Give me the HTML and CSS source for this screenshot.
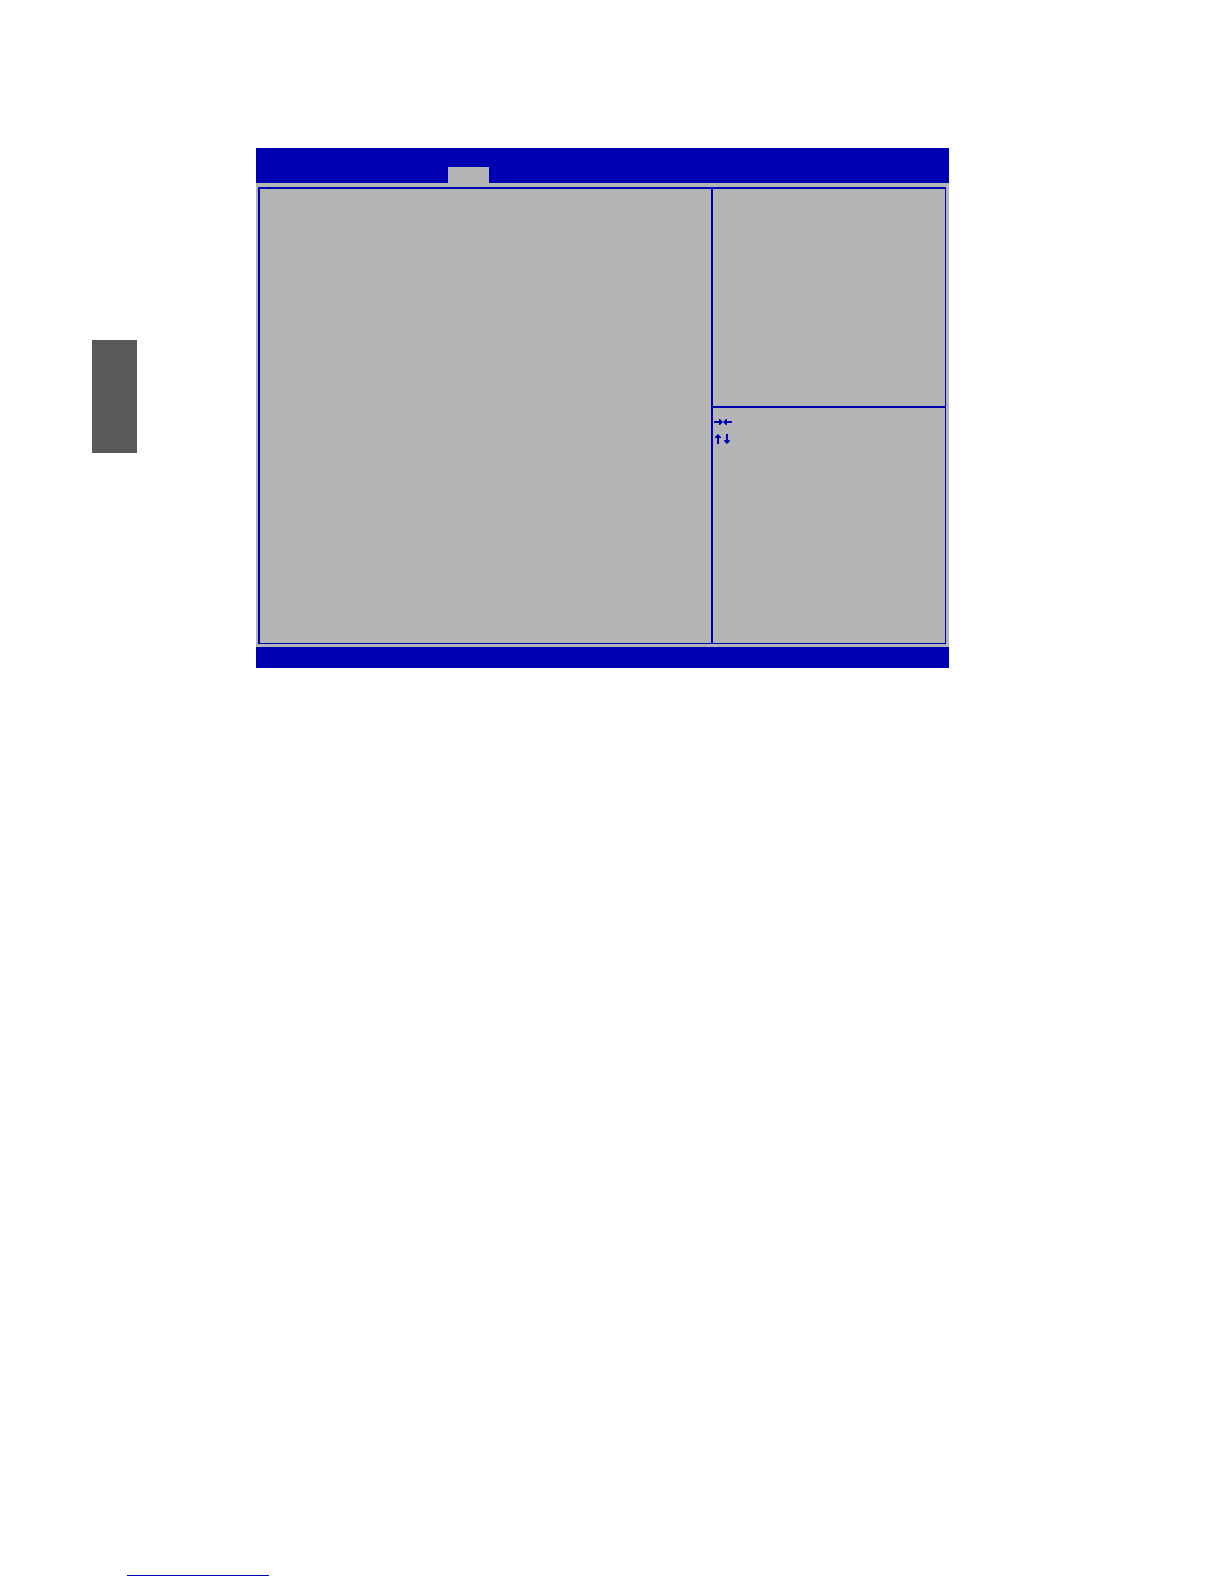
FILE: index.html
```
<!DOCTYPE html>
<html lang="en">
<head>
    <meta charset="UTF-8">
    <meta name="viewport" content="width=device-width, initial-scale=1.0">
    <title>BIOS Setup Utility</title>
    <link rel="stylesheet" href="styles.css">
</head>
<body>

<main class="page">
    <div class="side-tab"></div>

    <section class="screen">
        <header class="screen-header">
            <div class="active-tab"></div>
        </header>
        <div class="screen-body">
            <div class="settings"></div>
            <div class="sidebar">
                <div class="help"></div>
                <div class="keys">
                    <svg class="arrows" width="20" height="12" viewBox="0 0 20 12" aria-hidden="true">
                        <path d="M0 5h5V3h1l3 3-3 3H5V7H0zM18 5h-5V3h-1L9 6l3 3h1V7h5z"/>
                    </svg>
                    <svg class="arrows" width="20" height="12" viewBox="0 0 20 12" aria-hidden="true">
                        <path d="M3 11V5H1V4l3-3 3 3v1H5v6zM12 1v6h-2v1l3 3 3-3V7h-2V1z"/>
                    </svg>
                </div>
            </div>
        </div>
        <footer class="screen-footer"></footer>
    </section>
</main>

<footer class="page-footer">
    <div class="link-line"></div>
</footer>

</body>
</html>
```

FILE: styles.css
```
body {
    margin: 0;
    min-height: 100vh;
    display: flex;
    flex-direction: column;
    justify-content: space-between;
    font-family: "Liberation Sans", Arial, sans-serif;
    background-color: #ffffff;
}
.page {
    display: flex;
    align-items: flex-start;
    padding: 148px 275px 0 92px;
}

/* Gray chapter tab in the left margin */
.side-tab {
    flex: none;
    width: 45px;
    height: 113px;
    margin: 192px 119px 0 0;
    background-color: #58595b;
}

/* BIOS screen */
.screen {
    flex: 1;
    background-color: #b5b5b5;
}
.screen-header {
    display: flex;
    align-items: flex-end;
    height: 35px;
    padding-left: 192px;
    background-color: #0000b3;
}
.active-tab {
    width: 41px;
    height: 16px;
    background-color: #b5b5b5;
}
.screen-body {
    display: flex;
    min-height: 454px;
    margin: 4px 3px 3px 2px;
    border: 2px solid #0000b3;
    border-width: 2px 1px 1px 2px;
}
.settings {
    flex: 1;
}
.sidebar {
    display: flex;
    flex-direction: column;
    box-sizing: border-box;
    width: 234px;
    border-left: 2px solid #0000b3;
}
.help {
    min-height: 217px;
    border-bottom: 2px solid #0000b3;
}
.keys {
    display: flex;
    flex-direction: column;
    gap: 5px;
    padding: 8px 1px;
}
.arrows {
    fill: #0000b3;
}
.screen-footer {
    height: 21px;
    background-color: #0000b3;
}

/* Underline at the bottom of the page */
.page-footer {
    padding: 0 127px 8px;
}
.link-line {
    width: 142px;
    height: 1px;
    background-color: #0000b3;
}
```
